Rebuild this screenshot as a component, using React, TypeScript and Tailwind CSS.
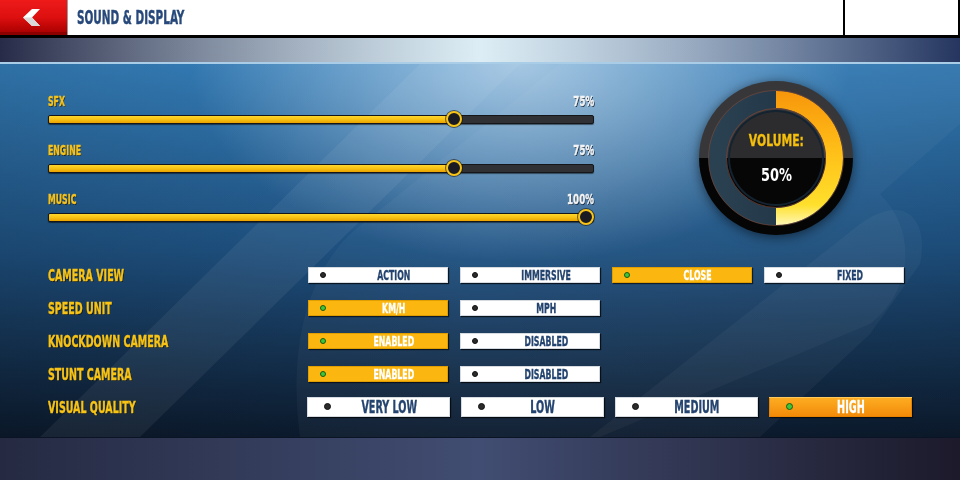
import React from "react";

const F = "font-['DejaVu_Sans_Condensed','Liberation_Sans',sans-serif]";

function Slider({ label, value }: { label: string; value: number }) {
  const p = value / 100;
  return (
    <div className="flex flex-col">
      <div className="flex h-[14px] items-center justify-between">
        <span className={`${F} inline-block origin-left scale-x-[0.62] text-[14px] font-bold leading-[14px] text-[#f6c21b] [-webkit-text-stroke:0.4px] [text-shadow:1px_1px_0_#0e1f33]`}>
          {label}
        </span>
        <span className={`${F} inline-block origin-right scale-x-[0.69] text-[14px] font-bold leading-[14px] text-[#f4f4f4] [-webkit-text-stroke:0.4px] [text-shadow:1px_1px_0_#0e1f33]`}>
          {value}%
        </span>
      </div>
      <div className="relative mt-[7px] h-[9px] rounded-[2px] border border-[#15161a] bg-[#303135] shadow-[0_1px_1px_rgba(0,0,0,0.5)]">
        <div
          className="h-full rounded-[1px] bg-linear-to-b from-[#ffd62a] via-[#f8c212] to-[#e9a200]"
          style={{ width: `calc(7px + ${p} * 530px)` }}
        />
        <div
          className="absolute top-1/2 h-[16px] w-[16px] -translate-x-1/2 -translate-y-1/2 rounded-full border-2 border-[#f7c417] bg-[#1b1c23] shadow-[0_0_0_1px_rgba(20,20,20,0.6)]"
          style={{ left: `calc(7px + ${p} * 530px)` }}
        />
      </div>
    </div>
  );
}

function Dial() {
  return (
    <div className="relative h-[154px] w-[154px] drop-shadow-[0_2px_6px_rgba(0,0,0,0.55)]">
      <svg width="154" height="154" viewBox="0 0 154 154" className="absolute inset-0">
        <defs>
          <linearGradient id="arcFill" x1="0" y1="0" x2="0" y2="1">
            <stop offset="0" stopColor="#f7960b" />
            <stop offset="0.45" stopColor="#ffbf18" />
            <stop offset="0.85" stopColor="#ffe02c" />
            <stop offset="1" stopColor="#fff7b4" />
          </linearGradient>
          <linearGradient id="trackFill" x1="0" y1="0" x2="1" y2="0">
            <stop offset="0" stopColor="#2a4152" />
            <stop offset="1" stopColor="#1d3142" />
          </linearGradient>
        </defs>
        <path d="M0,77 A77,77 0 0 1 154,77 Z" fill="#37373a" />
        <path d="M0,77 A77,77 0 0 0 154,77 Z" fill="#050505" />
        <circle cx="77" cy="77" r="58.5" fill="none" stroke="url(#trackFill)" strokeWidth="18" />
        <path d="M77,10 A67,67 0 0 1 77,144 L77,127 A50,50 0 0 0 77,27 Z" fill="url(#arcFill)" />
        <circle cx="77" cy="77" r="67.5" fill="none" stroke="#8a4a34" strokeOpacity="0.55" strokeWidth="1" />
        <circle cx="77" cy="77" r="48" fill="#142330" />
        <circle cx="77" cy="77" r="49.5" fill="none" stroke="#8a4a34" strokeOpacity="0.6" strokeWidth="1" />
        <path d="M31,77 A46,46 0 0 1 123,77 Z" fill="#2c2c2e" />
        <path d="M31,77 A46,46 0 0 0 123,77 Z" fill="#060606" />
      </svg>
      <div className="absolute inset-0 flex flex-col items-center justify-center pt-[2px]">
        <span className={`${F} inline-block scale-x-80 text-[15px] font-bold leading-[15px] text-[#f5bf0c] [-webkit-text-stroke:0.3px]`}>VOLUME:</span>
        <span className={`${F} mt-[17px] inline-block scale-x-80 text-[18px] font-bold leading-[18px] text-white`}>50%</span>
      </div>
    </div>
  );
}

type State = "off" | "on" | "high";

function Opt({ label, state, big }: { label: string; state: State; big?: boolean }) {
  const box =
    state === "off"
      ? "bg-white shadow-[inset_0_0_0_1px_#d6dbe2,1px_1px_1px_rgba(0,0,0,0.7)]"
      : state === "on"
      ? "bg-[#fbb710] shadow-[inset_0_0_0_1px_#e09e00,1px_1px_1px_rgba(0,0,0,0.6)]"
      : "bg-linear-to-b from-[#fdae22] to-[#f28905] shadow-[inset_0_1px_0_#ffc85a,inset_0_0_0_1px_#e98200,1px_1px_1px_rgba(0,0,0,0.6)]";
  const text = state === "off" ? "text-[#24446f]" : "text-white";
  const dot =
    state === "off"
      ? "bg-[#2b2b2b] border border-[#111]"
      : "bg-[#3fc53a] border border-[#175a16]";
  return (
    <div className={`flex items-center ${big ? "h-[20px] w-[143px]" : "h-[16px] w-[140px]"} ${box}`}>
      <span className={`shrink-0 rounded-full ${dot} ${big ? "ml-[17px] h-[7px] w-[7px]" : "ml-[12px] h-[6px] w-[6px]"}`} />
      <div className={`flex flex-1 justify-center ${big ? "pr-[3px]" : "pl-[14px]"}`}>
        <span
          className={`${F} inline-block font-bold ${text} [-webkit-text-stroke:0.35px] ${
            big ? "scale-x-[0.63] text-[17px] leading-[20px]" : "scale-x-[0.62] text-[14px] leading-[16px]"
          }`}
        >
          {label}
        </span>
      </div>
    </div>
  );
}

function Row({ label, children, big }: { label: string; children: React.ReactNode; big?: boolean }) {
  return (
    <div className="flex h-[33px] items-center">
      <div className={big ? "w-[259px]" : "w-[260px]"}>
        <span className={`${F} inline-block origin-left scale-x-[0.66] text-[16px] font-bold leading-[16px] text-[#f7c316] [-webkit-text-stroke:0.4px] [text-shadow:1px_1px_0_#0a1524]`}>
          {label}
        </span>
      </div>
      <div className={`flex ${big ? "gap-[11px]" : "gap-[12px]"}`}>{children}</div>
    </div>
  );
}

export default function App() {
  return (
    <div className="flex h-[480px] w-[960px] flex-col overflow-hidden bg-[#0e1c2e]">
      {/* top bar */}
      <div className="flex h-[38px] shrink-0 border-b-[3px] border-black bg-white">
        <div className="flex w-[67px] items-center justify-center bg-linear-to-b from-[#ee1a1a] via-[#dd0f0f] to-[#a30000] shadow-[inset_0_-3px_0_#8c0000]">
          <svg width="20" height="20" viewBox="0 0 20 20" className="ml-[-2px]">
            <polygon points="9,1 17,1 9,9.5 17,18 9,18 0,9.5" fill="#ffffff" />
            <polygon points="0,9.5 9,18 17,18 9,9.5" fill="#d9d9d9" />
          </svg>
        </div>
        <div className="w-px bg-[#9a9a9a]" />
        <div className="flex flex-1 items-center pl-[9px]">
          <span className={`${F} inline-block origin-left scale-x-[0.61] text-[19px] font-bold leading-[19px] text-[#27487a] [-webkit-text-stroke:0.4px]`}>
            SOUND &amp; DISPLAY
          </span>
        </div>
        <div className="w-[117px] border-x-2 border-black" />
      </div>

      {/* sky band */}
      <div className="relative h-[26px] shrink-0 bg-linear-to-r from-[#272b47] via-[#cfe6f1] to-[#25355f]">
        <div className="absolute inset-0 bg-linear-to-r from-transparent via-[#f0f8fb]/40 to-transparent" />
        <div className="absolute inset-x-0 bottom-0 h-[2px] bg-[#a9cde6]" />
      </div>

      {/* settings panel */}
      <div className="relative flex-1 overflow-hidden bg-linear-to-b from-[#3784c2] via-[#1f5384] to-[#0c1b2e]">
        <svg className="absolute inset-0" width="960" height="373" viewBox="0 0 960 373">
          <defs>
            <radialGradient id="glow" cx="520" cy="0" r="330" gradientUnits="userSpaceOnUse" gradientTransform="translate(520 0) scale(1 0.6) translate(-520 0)">
              <stop offset="0" stopColor="#ffffff" stopOpacity="0.55" />
              <stop offset="1" stopColor="#ffffff" stopOpacity="0" />
            </radialGradient>
            <linearGradient id="shade" x1="0" y1="0" x2="1" y2="0">
              <stop offset="0" stopColor="#000000" stopOpacity="0.15" />
              <stop offset="0.5" stopColor="#000000" stopOpacity="0" />
              <stop offset="1" stopColor="#000000" stopOpacity="0.1" />
            </linearGradient>
          </defs>
          <rect width="960" height="373" fill="url(#shade)" />
          <rect width="960" height="373" fill="url(#glow)" />
          <polygon points="420,0 520,0 140,373 40,373" fill="#ffffff" opacity="0.06" />
          <path d="M300,373 C290,300 300,220 350,170 L560,0 L960,0 L960,60 L880,130 C920,170 910,230 870,260 L600,373 Z" fill="#ffffff" opacity="0.035" />
          <path d="M590,373 L860,160 C900,130 930,150 920,200 L870,270 L760,373 Z" fill="#ffffff" opacity="0.04" />
        </svg>

        <div className="relative px-[48px]">
          <div className="flex items-start pt-[17px]">
            <div className="flex w-[546px] flex-col gap-[19px] pt-[12.5px]">
              <Slider label="SFX" value={75} />
              <Slider label="ENGINE" value={75} />
              <Slider label="MUSIC" value={100} />
            </div>
            <div className="ml-[105px]">
              <Dial />
            </div>
          </div>

          <div className="mt-[23px] flex flex-col">
            <Row label="CAMERA VIEW">
              <Opt label="ACTION" state="off" />
              <Opt label="IMMERSIVE" state="off" />
              <Opt label="CLOSE" state="on" />
              <Opt label="FIXED" state="off" />
            </Row>
            <Row label="SPEED UNIT">
              <Opt label="KM/H" state="on" />
              <Opt label="MPH" state="off" />
            </Row>
            <Row label="KNOCKDOWN CAMERA">
              <Opt label="ENABLED" state="on" />
              <Opt label="DISABLED" state="off" />
            </Row>
            <Row label="STUNT CAMERA">
              <Opt label="ENABLED" state="on" />
              <Opt label="DISABLED" state="off" />
            </Row>
            <Row label="VISUAL QUALITY" big>
              <Opt label="VERY LOW" state="off" big />
              <Opt label="LOW" state="off" big />
              <Opt label="MEDIUM" state="off" big />
              <Opt label="HIGH" state="high" big />
            </Row>
          </div>
        </div>
      </div>

      {/* footer strip */}
      <div className="h-[43px] shrink-0 bg-linear-to-r from-[#252a42] via-[#414d72] to-[#1c1a2b] shadow-[inset_0_1px_0_#0b1424]" />
    </div>
  );
}
